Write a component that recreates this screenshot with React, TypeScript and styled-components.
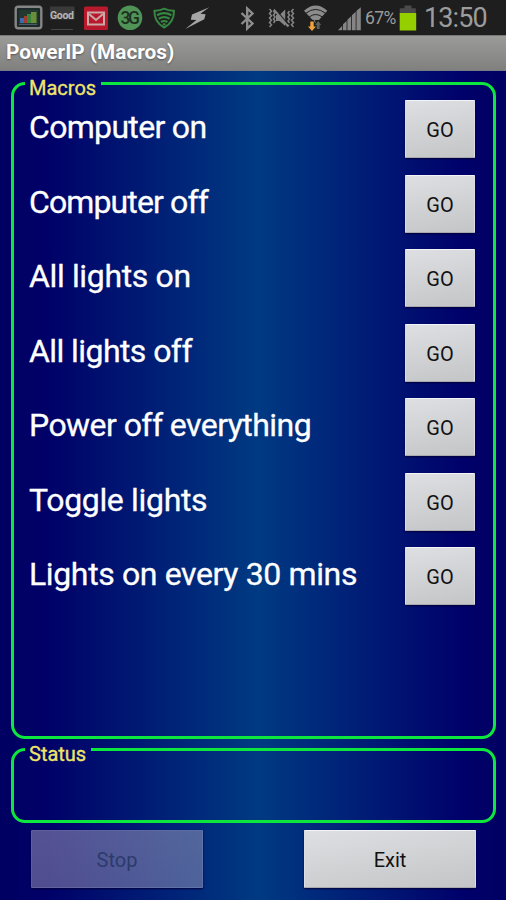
import React from "react";
import styled, { createGlobalStyle } from "styled-components";

const Global = createGlobalStyle`
  * { box-sizing: border-box; }
  html, body { margin: 0; padding: 0; background: #000060; }
  body { font-family: Roboto, "Liberation Sans", sans-serif; overflow: hidden; }
`;
const Screen = styled.main`
  width: 506px;
  height: 900px;
  display: flex;
  flex-direction: column;
  background: linear-gradient(90deg, #000062 0%, #000068 9%, #003a82 51%, #00006a 92%, #000062 100%);
`;
const StatusBar = styled.header`
  height: 35px;
  flex: none;
  background: #1e1e1e;
  display: flex;
`;
const StatusIcons = styled.svg`
  display: block;
  width: 362px;
  height: 35px;
  flex: none;
`;
const Percent = styled.span`
  width: 36px;
  padding-left: 3px;
  font-size: 17.5px;
  line-height: 37px;
  letter-spacing: -0.6px;
  color: #9c9c9c;
`;
const BatteryIcon = styled.svg`
  width: 20px;
  height: 35px;
`;
const Clock = styled.span`
  padding-left: 6px;
  font-size: 27px;
  line-height: 36px;
  letter-spacing: -0.9px;
  color: #9c9c9c;
`;
const TitleBar = styled.h1`
  height: 36px;
  flex: none;
  margin: 0;
  padding-left: 6px;
  font-size: 20.8px;
  line-height: 33px;
  font-weight: 700;
  color: #fff;
  background: linear-gradient(#9b9b98, #80807f);
  border-top: 1px solid #777;
  border-bottom: 1px solid #777b86;
  text-shadow: 0 1px 2px #555;
`;
const Content = styled.div`
  flex: 1;
  padding-top: 11px;
`;
const Panel = styled.fieldset<{ $height: number; $gap: number }>`
  height: ${(p) => p.$height}px;
  min-width: 0;
  margin: 0 10px ${(p) => p.$gap}px 11px;
  padding: 0;
  border: 3px solid #0de63c;
  border-radius: 14px;
`;
const Legend = styled.legend<{ $width: number }>`
  width: ${(p) => p.$width}px;
  height: 3px;
  margin-left: 11px;
  padding: 0 0 0 4px;
  font-size: 20px;
  font-weight: 400;
  line-height: 12px;
  color: #efe668;
  -webkit-text-stroke: 0.3px #efe668;
  white-space: nowrap;
`;
const Rows = styled.ul`
  list-style: none;
  margin: 0;
  padding: 15px 18px 0 15px;
`;
const Row = styled.li`
  height: 74.5px;
  display: flex;
  justify-content: space-between;
`;
const MacroName = styled.span<{ $tracking: number }>`
  font-size: 32px;
  line-height: 54px;
  letter-spacing: ${(p) => p.$tracking}px;
  white-space: nowrap;
  color: #fff;
  -webkit-text-stroke: 0.3px #fff;
`;
const Button = styled.button<{ $width: number }>`
  width: ${(p) => p.$width}px;
  height: 58px;
  padding: 2px 0 0;
  border: 1px solid;
  border-color: #f4f4f8 #dcdce2 #a9a9ae #dcdce2;
  border-radius: 1px;
  background: linear-gradient(170deg, #dedfe2, #c4c5c7);
  box-shadow: 0 1px 2px #00003c;
  font: 20px Roboto, "Liberation Sans", sans-serif;
  color: #111;
  &:disabled {
    background: linear-gradient(170deg, rgba(185, 180, 200, 0.46), rgba(175, 170, 195, 0.44));
    border-color: rgba(190, 190, 220, 0.15);
    color: #2b3b6b;
  }
`;
const Footer = styled.footer`
  display: flex;
  justify-content: space-between;
  padding: 0 30px 0 31px;
`;

const macros = [
  { name: "Computer on", tracking: -0.68 },
  { name: "Computer off", tracking: -0.88 },
  { name: "All lights on", tracking: -0.36 },
  { name: "All lights off", tracking: -0.57 },
  { name: "Power off everything", tracking: -0.56 },
  { name: "Toggle lights", tracking: -0.33 },
  { name: "Lights on every 30 mins", tracking: -0.37 },
];

export default function App() {
  return (
    <Screen>
      <Global />
      <StatusBar>
        <StatusIcons viewBox="0 0 362 35" fill="none">
          <rect x="15.7" y="6.7" width="25.6" height="21.6" rx="2.5" fill="#1c2a2a" stroke="#858585" strokeWidth="2.4" />
          <path d="M19 10h19v15H19z" fill="#23392f" />
          <path d="M20 23v-5h4v5z" fill="#3a6cb0" />
          <path d="M24 23v-7h3v7z" fill="#a33b35" />
          <path d="M27 23v-9h4v9z" fill="#38833a" />
          <path d="M31 23v-11h5.5v11z" fill="#6a8f3a" />
          <path d="M19 24.5h18" stroke="#4a5a6a" />

          <rect x="50" y="6.5" width="24.5" height="13" fill="#3a3a3a" />
          <text x="50" y="19" fontSize="10.5" fontWeight="700" fill="#b5b5b5" textLength="24">Good</text>
          <path d="M51 29.5h22" stroke="#484848" />

          <rect x="84" y="6.5" width="24" height="23.5" rx="1.5" fill="#b8192c" />
          <rect x="88" y="12.5" width="16" height="12" stroke="#c9a8a6" strokeWidth="2" />
          <path d="M89 14l7 6 7-6" stroke="#c9a8a6" strokeWidth="2" />

          <circle cx="130" cy="17.7" r="12.3" fill="#4f9357" />
          <text x="120.5" y="24" fontSize="17.5" fontWeight="500" fill="#1d3020" textLength="19.5">3G</text>

          <path d="M164.2 8.7c3 1.5 6 2.2 9.8 2 .2 7.5-3.2 13.2-9.8 16.8-6.6-3.6-10-9.3-9.8-16.8 3.8.2 6.8-.5 9.8-2z" stroke="#358742" strokeWidth="2" strokeLinejoin="round" />
          <path d="M157 15.2q7.2-4.2 14.4 0M158.8 18.7q5.4-3.3 10.8 0M161 22q3.2-2 6.4 0" stroke="#358742" strokeWidth="2.2" />
          <circle cx="164.2" cy="24.2" r="1.3" fill="#358742" />

          <path d="M209.3 7.3L192 14.5l-1.2 5.2 5.6.3L185.3 29l19-9.8 1.3-5-5.2-.4z" fill="#a5a5a5" />

          <path d="M241.5 13l11 10.5-5.3 5V8.5l5.3 5-11 10.5" stroke="#8d8d8d" strokeWidth="2.4" />

          <g stroke="#858585" strokeWidth="1.5">
            <path d="M269.5 9l2 2.2-2 2.3 2 2.3-2 2.2 2 2.3-2 2.3 2 2.2-2 2.2M273.5 11l1.5 2-1.5 2 1.5 2-1.5 2 1.5 2-1.5 2M293.5 9l-2 2.2 2 2.3-2 2.3 2 2.2-2 2.3 2 2.3-2 2.2 2 2.2M289.5 11l-1.5 2 1.5 2-1.5 2 1.5 2-1.5 2 1.5 2" />
            <path d="M274 9.5l14.5 17" strokeWidth="2.4" />
          </g>
          <path d="M276 15h3.5l5.7-5.5v16.5l-5.7-5H276z" fill="#858585" />
          <path d="M275 8.5l13 15.5" stroke="#1e1e1e" strokeWidth="1.1" />

          <path d="M304 10.7Q315.7 .2 327.3 10.7L315.8 23.5z" fill="#8b8b8b" />
          <path d="M305.8 13.3q9.8-7.8 19.8 0M309.2 17q6.5-5 13.2 0" stroke="#1e1e1e" strokeWidth="1" />
          <path d="M308.5 20.5l5.2-.7 2 6.2V23l-1-3h4.8l-2.8 4z" fill="#1e1e1e" />
          <path d="M310.3 21.5h3.4v5h2.3L312 31l-4-4.5h2.3z" fill="#f1a33b" />
          <path d="M316.8 29v-4h-1.6l3-4 3 4h-1.6v4z" fill="#5c625c" />

          <path d="M338 30.3l4.2-4.5v4.5zM343 30.3v-6l3.6-3.2v9.2zM347.4 30.3v-10.5l3.7-3.5v14zM351.9 30.3V15.2l3.8-3.4v18.5zM356.5 30.3V10.7l4.3-3.5v23.1z" fill="#858585" />
        </StatusIcons>
        <Percent>67%</Percent>
        <BatteryIcon viewBox="0 0 20 35">
          <path d="M6.5 5.5h7v2.8h4.3v5.5H1.7V8.3h4.8z" fill="#4a4a4a" />
          <path d="M1.7 13h16.5v17.5H1.7z" fill="#96cf00" />
        </BatteryIcon>
        <Clock>13:50</Clock>
      </StatusBar>
      <TitleBar>PowerIP (Macros)</TitleBar>
      <Content>
        <Panel $height={657} $gap={9}>
          <Legend $width={76}>Macros</Legend>
          <Rows>
            {macros.map(({ name, tracking }) => (
              <Row key={name}>
                <MacroName $tracking={tracking}>{name}</MacroName>
                <Button $width={70}>GO</Button>
              </Row>
            ))}
          </Rows>
        </Panel>
        <Panel $height={75} $gap={7}>
          <Legend $width={66}>Status</Legend>
        </Panel>
        <Footer>
          <Button $width={172} disabled>Stop</Button>
          <Button $width={172}>Exit</Button>
        </Footer>
      </Content>
    </Screen>
  );
}
